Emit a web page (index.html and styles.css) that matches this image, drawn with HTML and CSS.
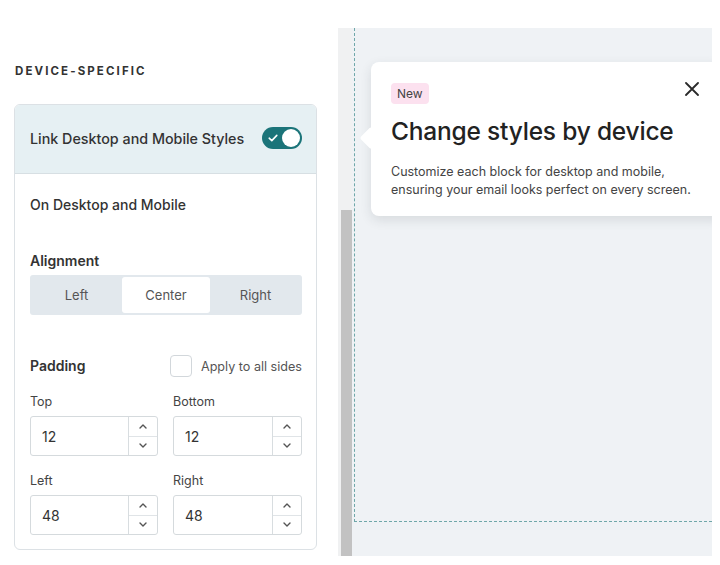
FILE: index.html
```html
<!DOCTYPE html>
<html>
<head>
<meta charset="utf-8">
<link rel="stylesheet" href="styles.css">
</head>
<body>
<div class="app">
  <aside class="panel">
    <h2 class="section-title">DEVICE-SPECIFIC</h2>
    <div class="card">
      <div class="card-head">
        <span class="head-label">Link Desktop and Mobile Styles</span>
        <span class="toggle">
          <svg class="check" width="10" height="8" viewBox="0 0 10 8"><path d="M1.2 4.2 L3.8 6.6 L8.8 1.4" fill="none" stroke="#fff" stroke-width="1.6" stroke-linecap="round" stroke-linejoin="round"/></svg>
          <span class="knob"></span>
        </span>
      </div>
      <div class="card-body">
        <div class="sub-title">On Desktop and Mobile</div>
        <div class="field-title">Alignment</div>
        <div class="segmented">
          <span class="seg">Left</span>
          <span class="seg active">Center</span>
          <span class="seg">Right</span>
        </div>
        <div class="padding-row">
          <span class="field-title">Padding</span>
          <label class="apply"><span class="checkbox"></span><span>Apply to all sides</span></label>
        </div>
        <div class="grid">
          <div class="cell">
            <div class="small-label">Top</div>
            <div class="num"><span class="val">12</span><span class="stepper"><span class="st">
              <svg width="8" height="5" viewBox="0 0 8 5"><path d="M1 4 L4 1 L7 4" fill="none" stroke="#555" stroke-width="1.4" stroke-linecap="round" stroke-linejoin="round"/></svg></span><span class="st">
              <svg width="8" height="5" viewBox="0 0 8 5"><path d="M1 1 L4 4 L7 1" fill="none" stroke="#555" stroke-width="1.4" stroke-linecap="round" stroke-linejoin="round"/></svg></span></span></div>
          </div>
          <div class="cell">
            <div class="small-label">Bottom</div>
            <div class="num"><span class="val">12</span><span class="stepper"><span class="st">
              <svg width="8" height="5" viewBox="0 0 8 5"><path d="M1 4 L4 1 L7 4" fill="none" stroke="#555" stroke-width="1.4" stroke-linecap="round" stroke-linejoin="round"/></svg></span><span class="st">
              <svg width="8" height="5" viewBox="0 0 8 5"><path d="M1 1 L4 4 L7 1" fill="none" stroke="#555" stroke-width="1.4" stroke-linecap="round" stroke-linejoin="round"/></svg></span></span></div>
          </div>
          <div class="cell">
            <div class="small-label">Left</div>
            <div class="num"><span class="val">48</span><span class="stepper"><span class="st">
              <svg width="8" height="5" viewBox="0 0 8 5"><path d="M1 4 L4 1 L7 4" fill="none" stroke="#555" stroke-width="1.4" stroke-linecap="round" stroke-linejoin="round"/></svg></span><span class="st">
              <svg width="8" height="5" viewBox="0 0 8 5"><path d="M1 1 L4 4 L7 1" fill="none" stroke="#555" stroke-width="1.4" stroke-linecap="round" stroke-linejoin="round"/></svg></span></span></div>
          </div>
          <div class="cell">
            <div class="small-label">Right</div>
            <div class="num"><span class="val">48</span><span class="stepper"><span class="st">
              <svg width="8" height="5" viewBox="0 0 8 5"><path d="M1 4 L4 1 L7 4" fill="none" stroke="#555" stroke-width="1.4" stroke-linecap="round" stroke-linejoin="round"/></svg></span><span class="st">
              <svg width="8" height="5" viewBox="0 0 8 5"><path d="M1 1 L4 4 L7 1" fill="none" stroke="#555" stroke-width="1.4" stroke-linecap="round" stroke-linejoin="round"/></svg></span></span></div>
          </div>
        </div>
      </div>
    </div>
  </aside>
  <div class="scroll-track"><div class="thumb"></div></div>
  <main class="canvas">
    <div class="email-area"></div>
    <div class="tip">
      <span class="tip-arrow"></span>
      <div class="tip-top">
        <span class="badge">New</span>
        <svg class="close" width="14" height="14" viewBox="0 0 14 14"><path d="M1 1 L13 13 M13 1 L1 13" stroke="#2a2a2a" stroke-width="1.8" stroke-linecap="round"/></svg>
      </div>
      <h1 class="tip-title">Change styles by device</h1>
      <p class="tip-text">Customize each block for desktop and mobile,<br>ensuring your email looks perfect on every screen.</p>
    </div>
  </main>
</div>
</body>
</html>
```

FILE: styles.css
```css
* { box-sizing: border-box; }
html, body { margin: 0; padding: 0; background: #fff; }
body {
  font-family: Inter, "Noto Sans", "Liberation Sans", sans-serif;
  color: #2e2e2e;
  width: 720px;
  height: 565px;
  overflow: hidden;
}
.app { display: flex; align-items: flex-start; }
.panel { width: 338px; padding: 64px 21px 0 14px; }
.section-title {
  margin: 0 0 26px 1px;
  font-size: 11.5px;
  font-weight: 700;
  letter-spacing: 2.1px;
  color: #333;
  line-height: 14px;
}
.card {
  width: 303px;
  border: 1px solid #dce1e5;
  border-radius: 6px;
  overflow: hidden;
  height: 446px;
}
.card-head {
  height: 69px;
  background: #e6f0f3;
  border-bottom: 1px solid #d7dfe3;
  display: flex;
  align-items: center;
  justify-content: space-between;
  padding: 0 14px 2px 15px;
}
.head-label { font-size: 14.3px; font-weight: 500; color: #333; letter-spacing: 0; }
.toggle {
  width: 40px; height: 22px; border-radius: 11px;
  background: #1b7479;
  display: flex; align-items: center; justify-content: space-between;
  padding: 0 2px 0 6px;
}
.knob { width: 18px; height: 18px; border-radius: 50%; background: #fff; }
.card-body { padding: 22px 14px 0 15px; }
.sub-title { font-size: 14px; font-weight: 500; color: #333; line-height: 18px; letter-spacing: 0; }
.field-title { font-size: 14px; font-weight: 600; color: #333; line-height: 18px; letter-spacing: 0; }
.sub-title + .field-title { margin-top: 38px; }
.segmented {
  margin-top: 5px;
  height: 40px;
  background: #e2e8ed;
  border-radius: 3px;
  display: flex;
  padding: 2px;
}
.seg {
  flex: 1;
  display: flex; align-items: center; justify-content: center;
  font-size: 13px; color: #555;
}
.seg.active { background: #fff; border-radius: 3px; flex: 0 0 88px; margin: 0 1px; }
.seg:first-child { flex: 0 0 89px; }
.padding-row {
  margin-top: 40px;
  display: flex; align-items: center; justify-content: space-between;
}
.apply { display: flex; align-items: center; gap: 9px; font-size: 12.6px; color: #555; }
.checkbox { width: 22px; height: 22px; border: 1px solid #d2d7db; border-radius: 4px; background: #fff; }
.grid {
  margin-top: 17px;
  display: grid;
  grid-template-columns: 128px 129px;
  column-gap: 15px;
  row-gap: 17px;
}
.small-label { font-size: 12.5px; color: #444; line-height: 16px; margin-bottom: 6px; }
.num {
  height: 40px;
  border: 1px solid #d5dadd;
  border-radius: 3px;
  display: flex;
  align-items: stretch;
}
.val { flex: 1; display: flex; align-items: center; padding-left: 11px; font-size: 14px; color: #333; }
.stepper { width: 29px; border-left: 1px solid #d8dde0; display: flex; flex-direction: column; }
.st { flex: 1; display: flex; align-items: center; justify-content: center; }
.st + .st { border-top: 1px solid #e0e4e7; }
.scroll-track {
  margin-top: 28px;
  width: 14px;
  height: 528px;
  background: #f0f1f2;
  display: flex; flex-direction: column; justify-content: flex-end; align-items: flex-end;
}
.thumb { width: 11px; height: 346px; background: #c2c2c2; }
.canvas {
  position: relative;
  margin-top: 28px;
  width: 360px;
  height: 528px;
  background: #eff2f5;
  overflow: hidden;
}
.email-area {
  margin-left: 2px;
  height: 494px;
  border-left: 1px dashed #6fa7a9;
  border-bottom: 1px dashed #6fa7a9;
}
.tip {
  position: absolute;
  left: 19px;
  top: 34px;
  width: 352px;
  height: 154px;
  background: #fff;
  border-radius: 8px;
  box-shadow: 0 4px 12px rgba(40, 50, 60, 0.12);
  padding: 21px 14px 0 20px;
}
.tip-arrow {
  position: absolute;
  left: -8px; top: 68px;
  width: 16px; height: 16px;
  background: #fff;
  transform: rotate(45deg);
  border-radius: 2px;
}
.tip-top { display: flex; justify-content: space-between; align-items: flex-start; width: 308px; }
.badge {
  background: #fce1ef;
  color: #444;
  font-size: 12px;
  line-height: 21px;
  height: 21px;
  padding: 0 6px;
  border-radius: 4px;
}
.close { margin-top: -1px; }
.tip-title {
  margin: 12px 0 0 0;
  font-size: 24.5px;
  font-weight: 500;
  letter-spacing: -0.2px;
  color: #222;
  line-height: 30px;
}
.tip-text {
  margin: 17px 0 0 0;
  font-size: 12.5px;
  line-height: 18px;
  color: #444;
}
```
